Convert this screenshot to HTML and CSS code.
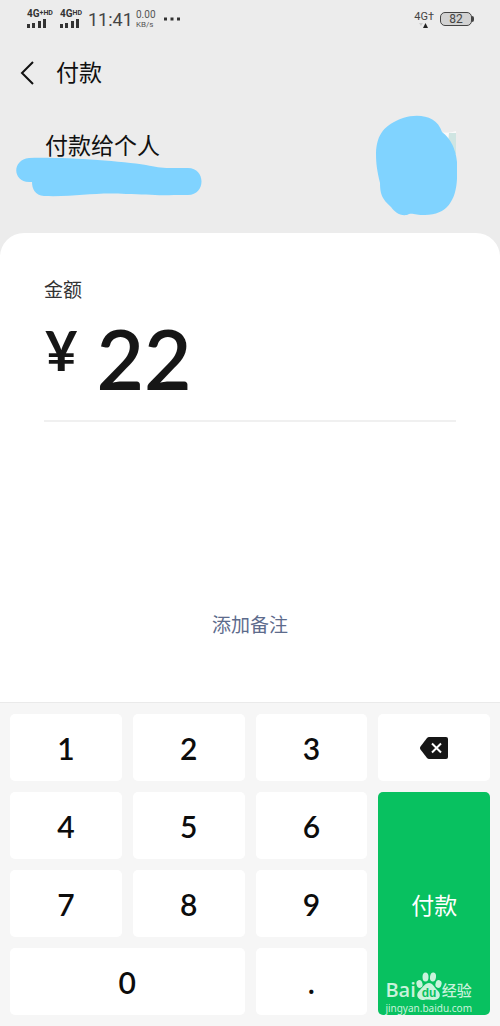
FILE: index.html
```html
<!DOCTYPE html>
<html lang="zh-CN">
<head>
<meta charset="utf-8">
<meta name="viewport" content="width=device-width, initial-scale=1">
<title>付款</title>
<link rel="stylesheet" href="styles.css">
</head>
<body>
<div class="page">
  <div class="status">
    <div class="signal">
      <span class="net">4G<sup>+HD</sup></span>
      <svg class="bars" viewBox="0 0 20 9"><path d="M0 5h3v4H0zM5 4h3v5H5zM11 2h3v7h-3zM16 0h3v9h-3z"/></svg>
    </div>
    <div class="signal">
      <span class="net">4G<sup>HD</sup></span>
      <svg class="bars" viewBox="0 0 20 9"><path d="M0 5h3v4H0zM5 4h3v5H5zM11 2h3v7h-3zM16 0h3v9h-3z"/></svg>
    </div>
    <time class="clock">11:41</time>
    <div class="rate"><span>0.00</span><span class="unit">KB/s</span></div>
    <svg class="dots" viewBox="0 0 18 4"><path d="M1 .5h3v3H1zM7.500 .5h3v3h-3zM14 .5h3v3h-3z"/></svg>
    <div class="status-right">
      <div class="data">
        <span>4G†</span>
        <svg viewBox="0 0 12 5"><path class="down" d="M0 0h4L2 3z"/><path d="M4 5 6.500 0 9 5z"/></svg>
      </div>
      <div class="battery"><span class="level">82</span></div>
    </div>
  </div>

  <header class="nav">
    <button class="back" type="button" aria-label="返回">
      <svg viewBox="0 0 14 24"><path d="M13 1 2 12l11 11"/></svg>
    </button>
    <h1>付款</h1>
  </header>

  <section class="payee">
    <div class="payee-info">
      <h2>付款给个人</h2>
      <svg class="name-mask" viewBox="0 0 188 42"><path d="M14 2C50 1 104 5 131 9c10 2 14 3 24 3h18c18 0 18 27 0 27h-14c-18 1-28-1-48-1-32-2-48 3-82 2-9-1-12-7-12-14H14C-3 25-3 4 14 2Z"/></svg>
    </div>
    <svg class="avatar" viewBox="0 0 84 102">
      <path class="photo" d="M65 17q9 2 16-1v27L65 26Z"/>
      <path class="photo-tint" d="M74 18h7v22l-8-12Z"/>
      <path class="paint" d="M28 3C44-2 62 1 67 17q13 10 15 30v17c-1 21-10 36-32 36-10 0-14-3-18 0-8 1-12-3-16-8C7 84 5 79 5 68 2 55 1 49 1 38 2 19 9 10 28 3Z"/>
    </svg>
  </section>

  <main class="sheet">
    <label class="amount-label" for="amount">金额</label>
    <div class="amount-row">
      <span class="currency">¥</span>
      <input id="amount" class="amount" type="text" inputmode="decimal" value="22">
    </div>
    <button class="note" type="button">添加备注</button>
  </main>

  <div class="keypad">
    <button class="key" type="button">1</button>
    <button class="key" type="button">2</button>
    <button class="key" type="button">3</button>
    <button class="key" type="button" aria-label="删除">
      <svg class="erase" viewBox="0 0 28 22"><path class="body" d="M9 0h17q2 0 2 2v18q0 2-2 2H9q-1 0-2-1L.5 12.500q-1-1.500 0-3L7 1q1-1 2-1Z"/><path class="cross" d="m12 6.500 9 9m0-9-9 9"/></svg>
    </button>
    <button class="key" type="button">4</button>
    <button class="key" type="button">5</button>
    <button class="key" type="button">6</button>
    <button class="key pay" type="button">付款</button>
    <button class="key" type="button">7</button>
    <button class="key" type="button">8</button>
    <button class="key" type="button">9</button>
    <button class="key zero" type="button">0</button>
    <button class="key" type="button">.</button>
    <div class="watermark">
      <div class="brand">
        <span class="bai">Bai</span>
        <svg class="paw" viewBox="0 0 26 28">
          <ellipse cx="3.500" cy="12" rx="3" ry="4" transform="rotate(-15 3.500 12)"/>
          <ellipse cx="9.500" cy="5" rx="3" ry="4.500"/>
          <ellipse cx="17" cy="5" rx="3" ry="4.500" transform="rotate(8 17 5)"/>
          <ellipse cx="22.500" cy="12" rx="3" ry="4" transform="rotate(15 22.500 12)"/>
          <path d="M13 11c4 0 5 4 8 7 5 4 3 10-3 10-3 0-7-1-10 0-7 0-9-6-4-10 3-3 5-7 9-7Z"/>
          <text x="13" y="25" text-anchor="middle">du</text>
        </svg>
        <span class="jy">经验</span>
      </div>
      <span class="site">jingyan.baidu.com</span>
    </div>
  </div>
</div>
</body>
</html>
```
FILE: styles.css
```css
* { box-sizing: border-box; }

body {
  margin: 0;
  background: #ececec;
  color: #111;
  font-family: "Liberation Sans", "Noto Sans CJK SC", sans-serif;
}

button {
  border: 0;
  padding: 0;
  background: none;
  color: inherit;
  font: inherit;
  cursor: pointer;
}

h1, h2 { margin: 0; font-weight: 400; }

svg { display: block; flex: none; }

.page {
  display: flex;
  flex-direction: column;
  min-height: 100vh;
}

/* Status bar */
.status {
  display: flex;
  align-items: center;
  height: 38px;
  padding: 0 28px 0 27px;
  color: #444;
  font-family: Roboto, sans-serif;
}

.signal {
  display: flex;
  flex-direction: column;
  gap: 1px;
  width: 33px;
}

.net {
  display: flex;
  color: #333;
  font-size: 10px;
  font-weight: 700;
  line-height: 8px;
}

.net sup { font-size: 7px; line-height: 6px; }

.bars { width: 20px; height: 9px; fill: #333; }

.clock {
  width: 48px;
  margin: 2px 0 0 -5px;
  font-size: 18px;
  line-height: 24px;
}

.rate {
  display: flex;
  flex-direction: column;
  width: 27px;
  color: #555;
  font-size: 10px;
  line-height: 11px;
}

.rate .unit { font-size: 8px; line-height: 10px; }

.dots { width: 18px; height: 4px; fill: #333; }

.status-right {
  display: flex;
  align-items: center;
  gap: 6px;
  margin-left: auto;
}

.data { font-size: 11px; line-height: 12px; }

.data svg { width: 12px; height: 5px; margin-left: 5px; fill: #222; }

.data .down { fill: #ccc; }

.battery {
  position: relative;
  width: 32px;
  height: 14px;
  border: 1px solid #444;
  border-radius: 5px;
  background: #d2d2d2;
  font-size: 12px;
  line-height: 12px;
  text-align: center;
}

.battery::after {
  content: "";
  position: absolute;
  top: 3px;
  right: -3px;
  width: 2px;
  height: 6px;
  border-radius: 0 2px 2px 0;
  background: #444;
}

/* Navigation */
.nav {
  display: flex;
  align-items: center;
  gap: 22px;
  height: 70px;
  padding-left: 20px;
}

.back svg {
  width: 14px;
  height: 24px;
  fill: none;
  stroke: #111;
  stroke-width: 2;
}

.nav h1, .payee h2 { font-size: 23px; line-height: 32px; }

/* Payee */
.payee {
  display: flex;
  justify-content: space-between;
  height: 125px;
  padding: 7px 41px 0 15px;
}

.payee-info { padding-top: 15px; }

.payee h2 { padding-left: 30px; }

.name-mask { width: 188px; height: 42px; margin-top: -6px; }

.name-mask path, .avatar .paint { fill: #80d3ff; }

.avatar { width: 84px; height: 102px; }

.photo { fill: #fafafa; }

.photo-tint { fill: #cfe5e2; }

/* Amount sheet */
.sheet {
  display: flex;
  flex: 1;
  flex-direction: column;
  padding: 42px 44px 60px;
  border-radius: 24px 24px 0 0;
  background: #fff;
}

.amount-label {
  color: #333;
  font-size: 19px;
  line-height: 32px;
}

.amount-row {
  display: flex;
  align-items: flex-start;
  gap: 19px;
  height: 115px;
  padding: 7px 0 0 1px;
  border-bottom: 2px solid #f0f0f0;
  color: #161616;
  font-family: Lato, sans-serif;
}

.currency {
  font-size: 56px;
  font-weight: 700;
  line-height: 72px;
}

.amount {
  flex: 1;
  min-width: 0;
  height: 88px;
  padding: 0;
  border: 0;
  outline: 0;
  background: none;
  color: inherit;
  font: 600 82px/88px Lato, sans-serif;
}

.note {
  align-self: center;
  margin-top: auto;
  color: #5d6b8c;
  font-size: 19px;
  line-height: 32px;
}

/* Keypad */
.keypad {
  position: relative;
  display: grid;
  grid-template-columns: repeat(4, 1fr);
  grid-auto-rows: 67px;
  gap: 11px;
  padding: 11px 10px;
  border-top: 1px solid #eaeaea;
  background: #f6f6f6;
}

.key {
  display: flex;
  align-items: center;
  justify-content: center;
  border-radius: 5px;
  background: #fff;
  color: #0c0c0c;
  font: 600 30px/34px Lato, sans-serif;
}

.zero { grid-column: span 2; }

.pay {
  grid-row: span 3;
  background: #08c160;
  color: #fff;
  font: 400 23px/32px "Noto Sans CJK SC", sans-serif;
}

.erase { width: 28px; height: 22px; }

.erase .body { fill: #161616; }

.erase .cross { stroke: #fff; stroke-width: 2; }

/* Site mark over the pay key */
.watermark {
  position: absolute;
  right: 28px;
  bottom: 10px;
  color: #c9f3dc;
  pointer-events: none;
}

.brand { display: flex; align-items: flex-end; }

.bai { font: 600 20px/20px "Open Sans", sans-serif; }

.paw { width: 26px; height: 28px; fill: #c9f3dc; }

.paw text { fill: #08c160; font: 700 12px "Liberation Sans", sans-serif; }

.jy { font: 500 15px/20px "Noto Sans CJK SC", sans-serif; }

.site {
  display: block;
  font: 400 10px/16px "Noto Sans", sans-serif;
}
```
